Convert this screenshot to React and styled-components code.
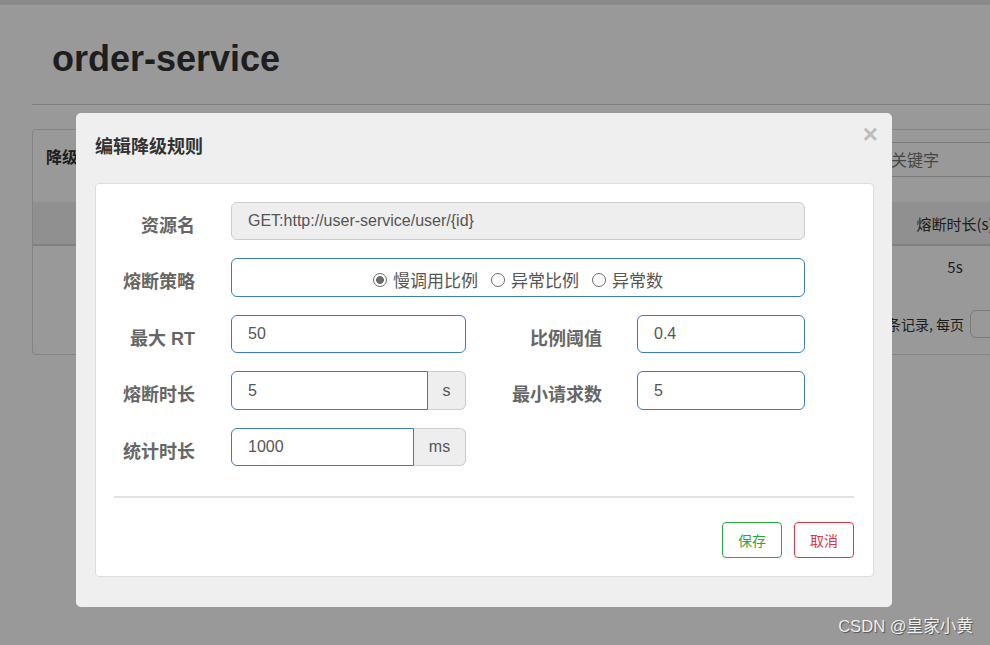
import React from "react";
import styled, { createGlobalStyle } from "styled-components";

const GlobalStyle = createGlobalStyle`
    html, body {
        margin: 0;
        padding: 0;
        width: 990px;
        height: 645px;
        overflow: hidden;
        background: #fff;
        font-family: "Liberation Sans", "Noto Sans CJK SC", sans-serif;
        color: #333;
    }
`;

const Page = styled.div`
    position: relative;
    width: 990px;
    height: 645px;
    overflow: hidden;
`;

const TopBar = styled.div`
    height: 5px;
    background: #e8e8e8;
`;

const Content = styled.div`
    padding: 0 0 0 32px;
    width: 1100px;
`;

const PageTitle = styled.h1`
    margin: 0;
    padding: 32px 0 0 20px;
    height: 67px;
    font-size: 36px;
    font-weight: bold;
    line-height: 44px;
    color: #333;
    border-bottom: 1px solid #d0d0d0;
`;

const Card = styled.div`
    margin-top: 24px;
    width: 1060px;
    height: 224px;
    border: 1px solid #dadada;
    border-radius: 4px;
`;

const CardHead = styled.div`
    display: flex;
    align-items: flex-start;
    height: 72px;
`;

const CardTitle = styled.div`
    padding: 14px 0 0 13px;
    font-size: 16px;
    font-weight: bold;
    font-family: "Noto Sans CJK SC", sans-serif;
`;

const Search = styled.div`
    margin: 12px 0 0 auto;
    width: 250px;
    height: 33px;
    border: 1px solid #ccc;
    border-right: none;
    border-radius: 4px 0 0 4px;
    padding-left: 12px;
    font-size: 16px;
    line-height: 33px;
    color: #777;
    font-family: "Noto Sans CJK SC", sans-serif;
`;

const TableRow = styled.div`
    display: grid;
    grid-template-columns: 862px 120px 1fr;
    align-items: center;
    height: ${p => p.h}px;
    background: ${p => p.head ? "#f0f0f0" : "transparent"};
    border-bottom: ${p => p.head ? "2px solid #d6d6d6" : "none"};
    font-size: 15px;
    color: #333;
    font-family: "Noto Sans CJK SC", sans-serif;
`;

const Cell = styled.div`
    text-align: center;
    white-space: nowrap;
`;

const Pager = styled.div`
    display: flex;
    align-items: center;
    gap: 6px;
    padding: 24px 0 0 826px;
    font-size: 14px;
    color: #333;
    white-space: nowrap;
    font-family: "Noto Sans CJK SC", sans-serif;
`;

const PageSelect = styled.div`
    width: 50px;
    height: 26px;
    border: 1px solid #ccc;
    border-radius: 6px;
`;

const Overlay = styled.div`
    position: absolute;
    inset: 0;
    background: rgba(0, 0, 0, 0.4);
`;

const Modal = styled.div`
    position: absolute;
    left: 76px;
    top: 113px;
    width: 816px;
    height: 494px;
    box-sizing: border-box;
    padding: 0 18px 30px 19px;
    background: #efefef;
    border-radius: 5px;
`;

const ModalTitle = styled.h4`
    margin: 0;
    padding: 20px 0 26px;
    font-size: 18px;
    line-height: 24px;
    font-weight: bold;
    color: #333;
    font-family: "Noto Sans CJK SC", sans-serif;
`;

const Close = styled.span`
    position: absolute;
    top: 6px;
    right: 14px;
    font-size: 26px;
    font-weight: bold;
    color: #bdbdbd;
    font-family: "Liberation Sans", sans-serif;
`;

const FormCard = styled.div`
    box-sizing: border-box;
    height: 394px;
    padding: 18px 19px 19px 18px;
    background: #fff;
    border: 1px solid #ddd;
    border-radius: 4px;
    display: flex;
    flex-direction: column;
`;

const Rows = styled.div`
    display: flex;
    flex-direction: column;
    gap: 18.5px;
`;

const Row = styled.div`
    display: flex;
    align-items: center;
    height: 38px;
`;

const Label = styled.label`
    box-sizing: border-box;
    width: ${p => p.w || 81}px;
    margin-right: ${p => p.gap || 36}px;
    padding-top: 5px;
    text-align: right;
    font-size: 18px;
    font-weight: bold;
    color: #666;
    white-space: nowrap;
    font-family: "Liberation Sans", "Noto Sans CJK SC", sans-serif;
`;

const Field = styled.div`
    box-sizing: border-box;
    width: ${p => p.w}px;
    height: 38.5px;
    padding-left: 16px;
    flex: ${p => p.grow ? 1 : "none"};
    display: flex;
    align-items: center;
    font-size: 16px;
    color: #555;
    background: ${p => p.readOnly ? "#eee" : "#fff"};
    border: 1px solid ${p => p.readOnly ? "#ccc" : "#3a7cbf"};
    border-radius: ${p => p.joined ? "6px 0 0 6px" : "6px"};
    font-family: "Liberation Sans", "Noto Sans CJK SC", sans-serif;
`;

const Group = styled.div`
    display: flex;
    width: ${p => p.w}px;
`;

const Addon = styled.div`
    box-sizing: border-box;
    width: ${p => p.w}px;
    height: 38.5px;
    display: flex;
    align-items: center;
    justify-content: center;
    font-size: 16px;
    color: #555;
    background: #eee;
    border: 1px solid #ccc;
    border-left: none;
    border-radius: 0 6px 6px 0;
`;

const RadioBox = styled.div`
    box-sizing: border-box;
    width: 574px;
    height: 38.5px;
    display: flex;
    align-items: center;
    justify-content: center;
    border: 1px solid #3a7cbf;
    border-radius: 6px;
    padding-top: 4px;
`;

const RadioItem = styled.span`
    display: inline-flex;
    align-items: center;
    gap: 6px;
    margin-right: 13px;
    font-size: 17px;
    color: #555;
    font-family: "Noto Sans CJK SC", sans-serif;
    &:last-child {
        margin-right: 0;
    }
`;

const Dot = styled.span`
    box-sizing: border-box;
    width: 14px;
    height: 14px;
    border-radius: 50%;
    border: 1px solid #6b6b6b;
    background: ${p => p.on ? "radial-gradient(circle, #6b6b6b 0 3.6px, #fff 4.2px)" : "#fff"};
`;

const Divider = styled.div`
    margin-top: 30px;
    border-top: 2px solid #e3e3e3;
`;

const Footer = styled.div`
    display: flex;
    justify-content: flex-end;
    gap: 12px;
    margin-top: 24px;
`;

const Btn = styled.button`
    width: 60px;
    height: 36px;
    padding: 0;
    background: #fff;
    border: 1px solid ${p => p.color};
    border-radius: 4px;
    color: ${p => p.color};
    font-size: 14px;
    font-family: "Noto Sans CJK SC", sans-serif;
`;

const Watermark = styled.div`
    position: absolute;
    right: 17px;
    bottom: 8px;
    font-size: 16.6px;
    color: rgba(255, 255, 255, 0.88);
    text-shadow: 1px 1px 1px rgba(0, 0, 0, 0.45);
    font-family: "Liberation Sans", "Noto Sans CJK SC", sans-serif;
`;

export default function App() {
    return (
        <Page>
            <GlobalStyle />
            <TopBar />
            <Content>
                <PageTitle>order-service</PageTitle>
                <Card>
                    <CardHead>
                        <CardTitle>降级规则</CardTitle>
                        <Search>请输入关键字</Search>
                    </CardHead>
                    <TableRow head h={42}>
                        <Cell />
                        <Cell>熔断时长(s)</Cell>
                        <Cell />
                    </TableRow>
                    <TableRow h={40}>
                        <Cell />
                        <Cell>5s</Cell>
                        <Cell />
                    </TableRow>
                    <Pager>
                        <span>共 1 条记录, 每页</span>
                        <PageSelect />
                    </Pager>
                </Card>
            </Content>

            <Overlay />

            <Modal>
                <ModalTitle>编辑降级规则</ModalTitle>
                <Close>×</Close>
                <FormCard>
                    <Rows>
                        <Row>
                            <Label>资源名</Label>
                            <Field w={574} readOnly>GET:http://user-service/user/{"{id}"}</Field>
                        </Row>
                        <Row>
                            <Label>熔断策略</Label>
                            <RadioBox>
                                <RadioItem><Dot on />慢调用比例</RadioItem>
                                <RadioItem><Dot />异常比例</RadioItem>
                                <RadioItem><Dot />异常数</RadioItem>
                            </RadioBox>
                        </Row>
                        <Row>
                            <Label>最大 RT</Label>
                            <Field w={235}>50</Field>
                            <Label w={136} gap={35}>比例阈值</Label>
                            <Field w={168}>0.4</Field>
                        </Row>
                        <Row>
                            <Label>熔断时长</Label>
                            <Group w={235}>
                                <Field grow joined>5</Field>
                                <Addon w={38}>s</Addon>
                            </Group>
                            <Label w={136} gap={35}>最小请求数</Label>
                            <Field w={168}>5</Field>
                        </Row>
                        <Row>
                            <Label>统计时长</Label>
                            <Group w={235}>
                                <Field grow joined>1000</Field>
                                <Addon w={52}>ms</Addon>
                            </Group>
                        </Row>
                    </Rows>
                    <Divider />
                    <Footer>
                        <Btn color="#28a745">保存</Btn>
                        <Btn color="#dc3545">取消</Btn>
                    </Footer>
                </FormCard>
            </Modal>

            <Watermark>CSDN @皇家小黄</Watermark>
        </Page>
    );
}
